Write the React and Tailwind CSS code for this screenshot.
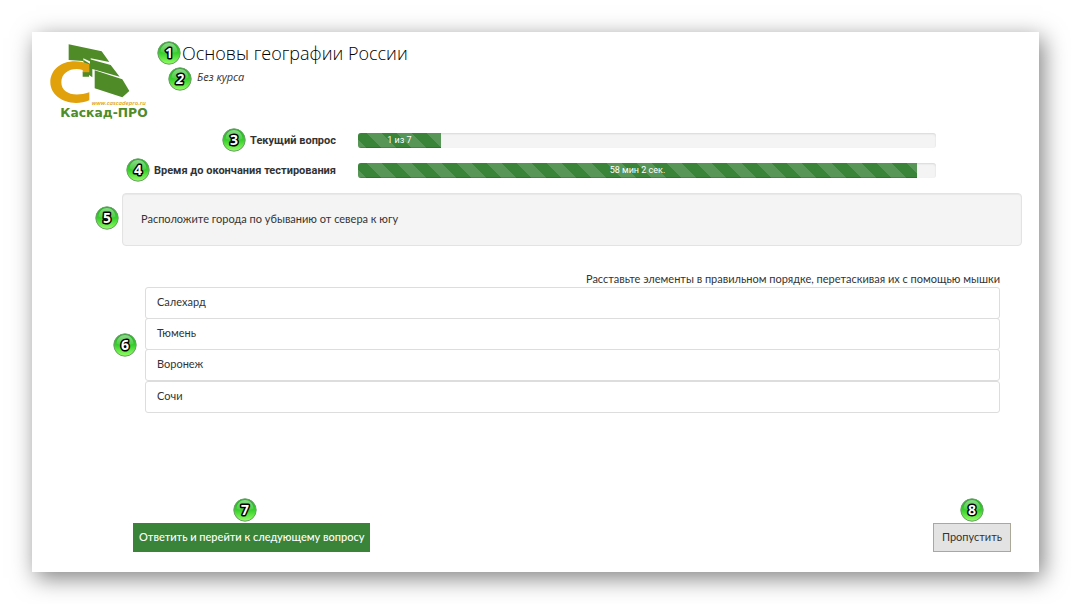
const cities = ['Салехард', 'Тюмень', 'Воронеж', 'Сочи'];

const stripes =
  'bg-[#398439] bg-[linear-gradient(45deg,transparent_25%,rgba(255,255,255,.15)_25%,rgba(255,255,255,.15)_50%,transparent_50%,transparent_75%,rgba(255,255,255,.15)_75%)] bg-[length:30px_30px] bg-[position:-6px_0]';

function Marker({ n, className }) {
  return (
    <svg viewBox="0 0 24 24" aria-hidden="true" className={`absolute z-10 size-6 ${className}`}>
      <defs>
        <linearGradient id={`ball-${n}`} x1="0" y1="0" x2="0" y2="1">
          <stop offset="0" stopColor="#1fae1f" />
          <stop offset=".5" stopColor="#37cf2b" />
          <stop offset="1" stopColor="#93ff66" />
        </linearGradient>
        <linearGradient id={`gloss-${n}`} x1="0" y1="0" x2="0" y2="1">
          <stop offset="0" stopColor="#fff" stopOpacity=".5" />
          <stop offset="1" stopColor="#fff" stopOpacity=".1" />
        </linearGradient>
      </defs>
      <circle cx="12" cy="12" r="11.2" fill={`url(#ball-${n})`} stroke="#6f9c6c" strokeWidth="1" />
      <path d="M3.5 10.5C4 5 7.5 2 12 2s8 3 8.5 8.5C17 13 14 10.5 12 11s-5 1.5-8.5-.5z" fill={`url(#gloss-${n})`} />
      <text
        x="12"
        y="17"
        textAnchor="middle"
        fill="#fff"
        stroke="#000"
        strokeWidth="3"
        strokeLinejoin="round"
        paintOrder="stroke"
        className="font-['Open_Sans',sans-serif] text-[14px] font-bold"
      >
        {n}
      </text>
    </svg>
  );
}

function Logo() {
  return (
    <svg viewBox="84 66 306 234" role="img" aria-label="Каскад-ПРО" className="h-[78px] w-[102px] shrink-0">
      <g fill="#4f8b27">
        <path d="M146 73l99 21 23 32-56-11v10l-22-10v8l-44-3z" />
        <path d="M190 119l20 12v-13l62 17 27 35-82-23v25l-10-7v5h-19v-14h17v-20l-15-9z" />
        <path d="M224 151l83 27 21 35-21 19-83-27z" />
      </g>
      <path
        d="M208 133C150 108 91 136 91 187c0 46 59 77 117 54v-24c-48 16-84 2-84-30s34-46 64-37v7h20z"
        fill="#e0a10b"
      />
      <text x="215" y="256" fill="#e0a10b" className="font-['Open_Sans',sans-serif] text-[18px] font-semibold italic">
        www.cascadepro.ru
      </text>
      <text x="121" y="291" fill="#4f8b27" className="font-['DejaVu_Sans',sans-serif] text-[37px] font-bold">
        Каскад-ПРО
      </text>
    </svg>
  );
}

function ProgressRow({ n, label, value, text }) {
  return (
    <div className="flex h-[30px] items-center gap-[22px] pr-[103px]">
      <div className="w-[304px] shrink-0 text-right">
        <span className="relative font-['Roboto',sans-serif] font-bold">
          <Marker n={n} className="-top-[6px] -left-7" />
          {label}
        </span>
      </div>
      <div className="h-[15px] flex-1 overflow-hidden rounded-[3px] bg-[#f4f4f4] shadow-[inset_0_1px_2px_rgba(0,0,0,.12)]">
        <div
          role="progressbar"
          aria-label={label}
          aria-valuenow={Math.round(value)}
          style={{ width: `${value}%` }}
          className={`h-full text-center font-['Roboto',sans-serif] text-[9px] leading-[15px] text-white shadow-[inset_0_-1px_0_rgba(0,0,0,.15)] ${stripes}`}
        >
          {text}
        </div>
      </div>
    </div>
  );
}

export default function App() {
  return (
    <div className="bg-white p-8 font-['Lato',sans-serif] text-[11px] leading-[15px] text-[#333]">
      <main className="bg-white pb-5 shadow-[4px_6px_22px_rgba(0,0,0,.5)]">
        <header className="flex items-start pt-[10px] pl-4">
          <Logo />
          <div className="pl-8">
            <h1 className="relative font-['Open_Sans',sans-serif] text-[18px] leading-[22px] font-light text-black">
              <Marker n={1} className="-top-px -left-[25px]" />
              Основы географии России
            </h1>
            <p className="relative mt-[5px] ml-[15px] font-['Open_Sans',sans-serif] italic">
              <Marker n={2} className="-top-[2px] -left-[29px]" />
              Без курса
            </p>
          </div>
        </header>

        <section className="pt-[5px]">
          <ProgressRow n={3} label="Текущий вопрос" value={14.3} text="1 из 7" />
          <ProgressRow n={4} label="Время до окончания тестирования" value={96.7} text="58 мин 2 сек." />
        </section>

        <section className="relative mt-2 mr-[17px] ml-[90px] rounded-[4px] border border-[#e3e3e3] bg-[#f4f4f4] px-[18px] pt-[17px] pb-[19px] shadow-[inset_0_1px_1px_rgba(0,0,0,.05)]">
          <Marker n={5} className="top-3 -left-7" />
          <p>Расположите города по убыванию от севера к югу</p>
        </section>

        <section className="mt-[25px] mr-[39px] ml-[113px]">
          <p className="pb-px text-right">Расставьте элементы в правильном порядке, перетаскивая их с помощью мышки</p>
          <div className="relative">
            <Marker n={6} className="top-[46px] -left-8" />
            <ul>
              {cities.map((city) => (
                <li
                  key={city}
                  draggable
                  className="-mt-px h-8 cursor-move rounded-[3px] border border-[#ddd] px-[11px] py-[6px] first:mt-0 last:mt-0"
                >
                  {city}
                </li>
              ))}
            </ul>
          </div>
        </section>

        <footer className="mt-[110px] mr-7 ml-[101px] flex justify-between">
          <button type="button" className="relative h-[29px] bg-[#398439] px-[6px] pb-[2px] font-medium text-white">
            <Marker n={7} className="-top-[25px] left-[100px]" />
            Ответить и перейти к следующему вопросу
          </button>
          <button type="button" className="relative h-[29px] border border-[#aca899] bg-[#e3e3e3] px-2 pb-[2px]">
            <Marker n={8} className="-top-[26px] left-[26px]" />
            Пропустить
          </button>
        </footer>
      </main>
    </div>
  );
}
